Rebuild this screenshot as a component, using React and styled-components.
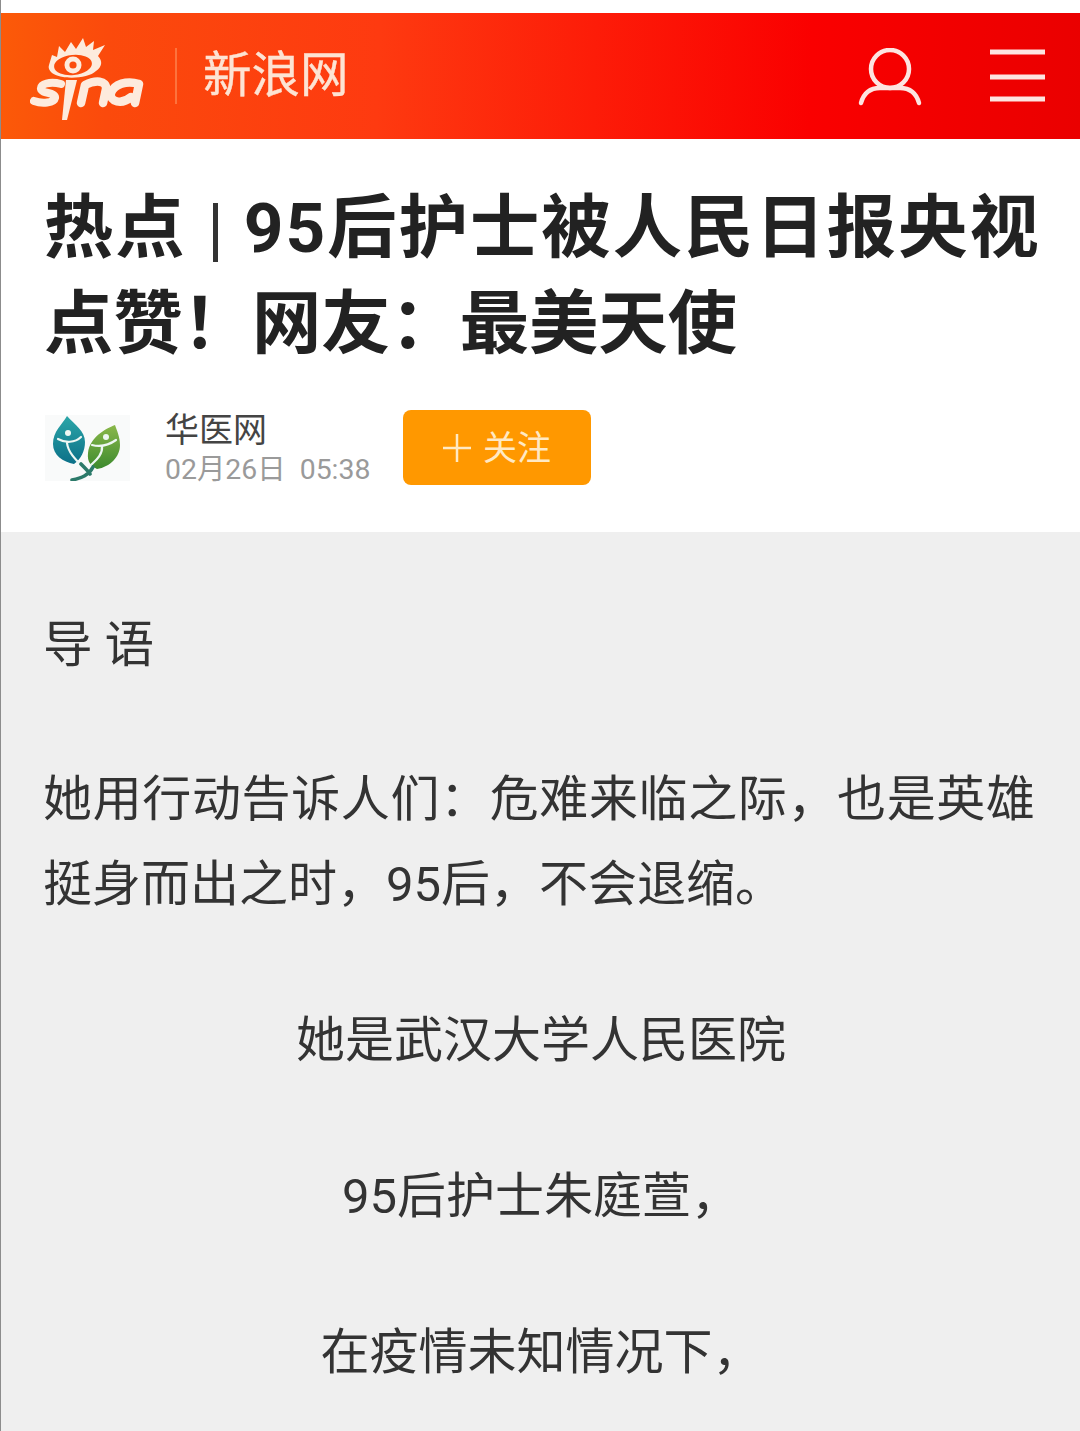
import React from "react";
import styled, { createGlobalStyle } from "styled-components";

const STACK = `"Roboto", "Noto Sans CJK SC", "Noto Sans", sans-serif`;

const Global = createGlobalStyle`
  html, body { margin: 0; padding: 0; background: #fff; }
  body { font-family: ${STACK}; }
`;

const Page = styled.div`
  width: 1080px;
  height: 1431px;
  overflow: hidden;
  box-sizing: border-box;
  padding-top: 13px;
  border-left: 1px solid #8c8c8c;
  background: #fff;
`;

const Header = styled.header`
  height: 126px;
  display: flex;
  align-items: center;
  justify-content: space-between;
  padding: 0 35px 0 29px;
  background: linear-gradient(92deg, #fb5a08 0%, #fb4a0c 10%, #fe3a10 35%, #fd1c08 55%, #fa0000 75%, #ea0000 100%);
`;

const Brand = styled.div`
  display: flex;
  align-items: center;
`;

const LogoSlot = styled.div`
  margin-top: 8px;
`;

const Divider = styled.span`
  width: 2px;
  height: 56px;
  margin: 0 26px 0 31px;
  background: rgba(255, 170, 120, 0.45);
`;

const SiteName = styled.span`
  font: 400 48.5px/1 ${STACK};
  color: #fde3d3;
  -webkit-text-stroke: 0.4px #fde3d3;
`;

const HeaderIcons = styled.div`
  display: flex;
  align-items: center;
  gap: 68px;
`;

const Title = styled.h1`
  margin: 0;
  padding: 42px 20px 0 43px;
  font: 700 69.3px/96px ${STACK};
  color: #222;
  white-space: nowrap;
`;

const TitleLead = styled.span`
  letter-spacing: 2.05px;
`;

const TitlePipe = styled.span`
  display: inline-block;
  width: 5px;
  height: 59px;
  margin: 0 26px;
  vertical-align: -10px;
  background: #333;
`;

const Meta = styled.div`
  display: flex;
  align-items: flex-start;
  height: 159px;
  padding: 36px 0 0 44px;
  box-sizing: border-box;
`;

const Avatar = styled.div`
  width: 85px;
  height: 66px;
  margin-top: 6px;
  background: #f9fafa;
`;

const Source = styled.div`
  margin: 2px 0 0 35px;
  width: 238px;
  display: flex;
  flex-direction: column;
`;

const SourceName = styled.span`
  font: 400 34px/39px ${STACK};
  color: #444;
`;

const SourceTime = styled.span`
  font: 400 28.4px/39px ${STACK};
  color: #9a9a9a;
  white-space: pre;
`;

const Follow = styled.button`
  width: 188px;
  height: 75px;
  margin-top: 1px;
  border: 0;
  border-radius: 8px;
  background: #ff9800;
  color: #ffe9c4;
  font: 400 34px/1 ${STACK};
  padding: 0;
  display: flex;
  align-items: center;
  justify-content: center;
  gap: 12px;
`;

const Body = styled.main`
  height: 899px;
  background: #efefef;
  box-sizing: border-box;
  padding: 71px 45px 0 42px;
`;

const Lead = styled.div`
  font: 400 49.5px/84px ${STACK};
  color: #333;
  letter-spacing: 12px;
  margin-bottom: 70px;
`;

const Para = styled.p`
  margin: 0 0 72px;
  font: 400 49px/85px ${STACK};
  color: #333;
  text-align: justify;
`;

const CenterPara = styled(Para)`
  padding-left: 4px;
  line-height: 84px;
  text-align: center;
`;

const SinaLogo = () => (
  <svg width="114" height="84" viewBox="0 0 114 84" style={{ display: "block" }}>
    <path
      fill="#fdebdd"
      d="M19 27 L22 17 L27 19 L29 8 L35 14 L41 4 L46 11 L53 0 L56 9 L64 3 L63 12 L75 7 L68 18 C73 23 72 29 66 33 C58 41 31 42 22 35 C19 32 18 30 19 27 Z"
    />
    <ellipse cx="43" cy="27" rx="19" ry="10" fill="#fb4c0c" transform="rotate(-6 43 27)" />
    <circle cx="43" cy="27" r="8.5" fill="#fdebdd" />
    <circle cx="43" cy="27" r="3.6" fill="#fb4c0c" />
    <g fill="none" stroke="#fdebdd" strokeLinecap="round" strokeLinejoin="round">
      <path d="M31 46 C20 43 10 46 11 51 C12 56 26 54 25 60 C24 65 12 66 4 63" strokeWidth="8" />
      <path d="M51 65 L55 47 C65 42 77 42 76 51 L73 65" strokeWidth="8.5" />
      <path d="M109 46 C97 42 84 46 81 55 C79 64 92 67 101 59 M109 46 L105 65" strokeWidth="8.5" />
    </g>
    <path d="M36 42 L47 42 L37 82 L32 82 Z" fill="#fdebdd" />
  </svg>
);

const UserIcon = () => (
  <svg width="64" height="60" viewBox="0 0 64 60" fill="none" stroke="#fde4e0" strokeWidth="4.5" strokeLinecap="round" style={{ display: "block", marginTop: 4 }}>
    <circle cx="32" cy="21" r="19" />
    <path d="M3 55 C6 44 13 40 22 40 L42 40 C51 40 58 44 61 55" />
  </svg>
);

const MenuIcon = () => (
  <svg width="55" height="54" viewBox="0 0 55 54" fill="none" stroke="#fde4e0" strokeWidth="5" style={{ display: "block" }}>
    <path d="M0 3 H55 M0 28 H55 M0 50 H55" />
  </svg>
);

const PlusIcon = () => (
  <svg width="28" height="28" viewBox="0 0 28 28" fill="none" stroke="#ffe9c4" strokeWidth="2.5" style={{ display: "block" }}>
    <path d="M0 14 H28 M14 0 V28" />
  </svg>
);

const LeafLogo = () => (
  <svg width="85" height="66" viewBox="0 0 85 66" style={{ display: "block" }}>
    <defs>
      <linearGradient id="tealLeaf" x1="0" y1="0" x2="0" y2="1">
        <stop offset="0" stopColor="#2ba6a8" />
        <stop offset="1" stopColor="#0c7088" />
      </linearGradient>
      <linearGradient id="greenLeaf" x1="0" y1="0" x2="0" y2="1">
        <stop offset="0" stopColor="#8ab84a" />
        <stop offset="1" stopColor="#3d8a2e" />
      </linearGradient>
    </defs>
    <path d="M22 1 C17 10 8 16 8 29 C8 40 18 47 29 49 C36 44 40 36 40 27 C40 16 30 10 22 1 Z" fill="url(#tealLeaf)" />
    <path d="M70 10 C60 14 45 22 43 38 C42 47 46 51 52 54 C65 52 75 42 75 30 C75 22 72 16 70 10 Z" fill="url(#greenLeaf)" />
    <g fill="none" stroke="#eef7f3" strokeWidth="2.2" strokeLinecap="round">
      <path d="M13 24 C20 28 30 28 36 22" />
      <path d="M22 28 C23 37 30 44 38 52" />
      <path d="M47 30 C55 32 64 30 71 25" />
      <path d="M57 31 C58 40 50 46 46 50" />
    </g>
    <circle cx="23" cy="18" r="3" fill="#eef7f3" />
    <circle cx="61" cy="22" r="3" fill="#eef7f3" />
    <path d="M27 65 C37 63 44 60 48 52 M36 49 C40 53 44 57 45 59" fill="none" stroke="#2c7a6a" strokeWidth="3.6" strokeLinecap="round" />
  </svg>
);

export default function App() {
  return (
    <>
      <Global />
      <Page>
        <Header>
          <Brand>
            <LogoSlot>
              <SinaLogo />
            </LogoSlot>
            <Divider />
            <SiteName>新浪网</SiteName>
          </Brand>
          <HeaderIcons>
            <UserIcon />
            <MenuIcon />
          </HeaderIcons>
        </Header>
        <Title>
          <TitleLead>
            热点
            <TitlePipe aria-label="|" />
            95后护士被人民日报央视
          </TitleLead>
          <br />
          点赞！网友：最美天使
        </Title>
        <Meta>
          <Avatar>
            <LeafLogo />
          </Avatar>
          <Source>
            <SourceName>华医网</SourceName>
            <SourceTime>02月26日  05:38</SourceTime>
          </Source>
          <Follow>
            <PlusIcon />
            关注
          </Follow>
        </Meta>
        <Body>
          <Lead>导语</Lead>
          <Para>
            她用行动告诉人们：危难来临之际，也是英雄挺身而出之时，95后，不会退缩。
          </Para>
          <CenterPara>她是武汉大学人民医院</CenterPara>
          <CenterPara>95后护士朱庭萱，</CenterPara>
          <CenterPara>在疫情未知情况下，</CenterPara>
        </Body>
      </Page>
    </>
  );
}
